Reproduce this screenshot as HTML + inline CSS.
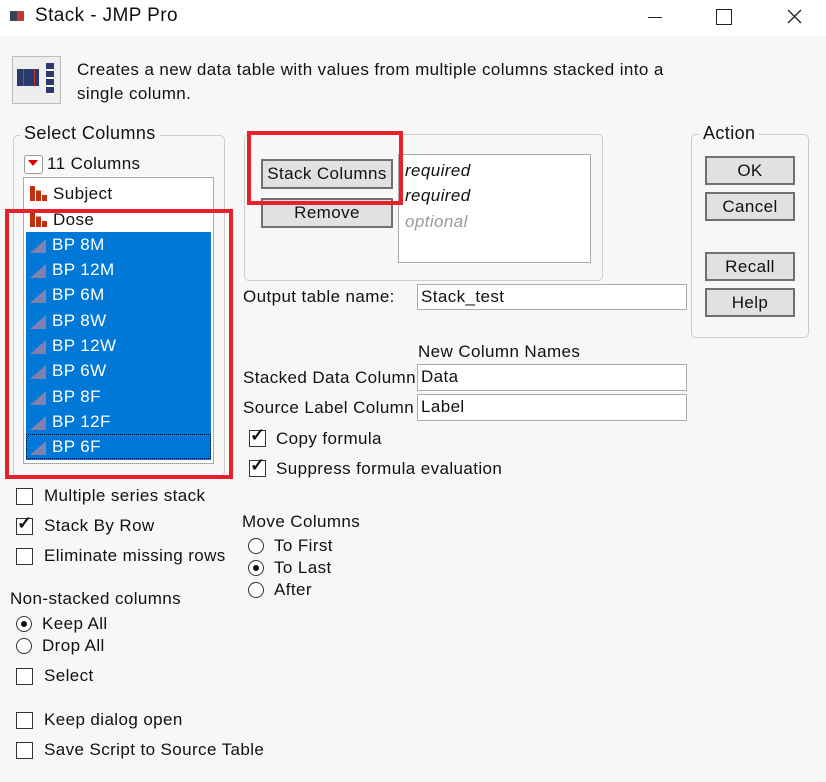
<!DOCTYPE html><html><head><style>
body{margin:0;width:826px;height:782px;background:#f7f7f7;font-family:"Liberation Sans",sans-serif;font-size:17px;letter-spacing:0.4px;color:#111;position:relative;overflow:hidden}
.a{position:absolute;white-space:nowrap}
.tb{position:absolute;left:0;top:0;width:826px;height:36px;background:#fff}
.btn{position:absolute;background:#e1e1e1;border:2px solid #707070;box-sizing:border-box;text-align:center}
.inp{position:absolute;background:#fff;border:1px solid #aaa;box-sizing:border-box;padding-left:3px;line-height:24px}
.cb{position:absolute;width:17px;height:17px;border:1px solid #333;background:#fff;box-sizing:border-box}
.rd{position:absolute;width:16px;height:16px;border:1px solid #333;border-radius:50%;background:#fff;box-sizing:border-box}
.grp{position:absolute;border:1px solid #ccc;border-radius:5px}
.row{position:absolute;left:26px;width:185px;height:25px;line-height:25px}
.sel{background:#0078d7;color:#fff}
.red{position:absolute;border:4px solid #e8202a;box-sizing:border-box}
.tri{display:inline-block;width:0;height:0;border-left:16px solid transparent;border-bottom:14px solid #8080b0;margin:0 6px 0 4px;vertical-align:-3px}
.bar{display:inline-block;width:17px;height:15px;margin:0 6px 0 4px;vertical-align:-2px;background:linear-gradient(90deg,#c03010 0 5px,transparent 5px 6px,#c03010 6px 11px,transparent 11px 12px,#c03010 12px 17px);clip-path:polygon(0 0,5px 0,5px 30%,6px 30%,6px 30%,11px 30%,11px 60%,17px 60%,17px 100%,0 100%)}
.ck{position:absolute;font-size:18px;font-weight:bold}
</style></head><body>
<div class="tb"></div>
<div class="a" style="left:10px;top:11px;width:14px;height:10px;background:linear-gradient(90deg,#345 0 50%,#c33 50%)"></div>
<div class="a" style="left:35px;top:5px;font-size:19px">Stack - JMP Pro</div>
<div class="a" style="left:648px;top:17px;width:14px;height:1px;background:#222"></div>
<div class="a" style="left:716px;top:9px;width:14px;height:14px;border:1px solid #222"></div>
<svg class="a" style="left:787px;top:9px" width="15" height="15"><path d="M1 1L14 14M14 1L1 14" stroke="#222" stroke-width="1.3"/></svg>
<div class="a" style="left:12px;top:56px;width:47px;height:46px;border:1px solid #bbb;background:#eee"></div>
<div class="a" style="left:17px;top:69px;width:22px;height:17px;background:repeating-linear-gradient(90deg,#2a3a6a 0 6px,#c33 6px 7px,#2a3a6a 7px 11px)"></div>
<div class="a" style="left:46px;top:63px;width:8px;height:32px;background:repeating-linear-gradient(#2a3a6a 0 6px,#fff 6px 8px)"></div>
<div class="a" style="left:77px;top:58px;line-height:24px">Creates a new data table with values from multiple columns stacked into a<br>single column.</div>
<div class="grp" style="left:13px;top:135px;width:210px;height:340px"></div>
<div class="a" style="left:20px;top:123px;background:#f7f7f7;padding:0 4px;font-size:18px">Select Columns</div>
<div class="a" style="left:24px;top:155px;width:17px;height:17px;border:1px solid #999;border-radius:3px;background:#fff"></div>
<div class="a" style="left:28px;top:160px;border-left:5px solid transparent;border-right:5px solid transparent;border-top:6px solid #d00"></div>
<div class="a" style="left:47px;top:154px">11 Columns</div>
<div class="a" style="left:23px;top:177px;width:189px;height:285px;background:#fff;border:1px solid #aaa"></div>
<div class="row" style="top:181px"><span class="bar"></span>Subject</div>
<div class="row" style="top:207px"><span class="bar"></span>Dose</div>
<div class="a sel" style="left:26px;top:232px;width:185px;height:228px"></div>
<div class="row sel" style="top:232px"><span class="tri"></span>BP 8M</div>
<div class="row sel" style="top:257px"><span class="tri"></span>BP 12M</div>
<div class="row sel" style="top:282px"><span class="tri"></span>BP 6M</div>
<div class="row sel" style="top:308px"><span class="tri"></span>BP 8W</div>
<div class="row sel" style="top:333px"><span class="tri"></span>BP 12W</div>
<div class="row sel" style="top:358px"><span class="tri"></span>BP 6W</div>
<div class="row sel" style="top:384px"><span class="tri"></span>BP 8F</div>
<div class="row sel" style="top:409px"><span class="tri"></span>BP 12F</div>
<div class="row sel" style="top:434px;outline:1px dotted #003;outline-offset:-1px"><span class="tri"></span>BP 6F</div>
<div class="red" style="left:5px;top:209px;width:228px;height:270px"></div>
<div class="cb" style="left:16px;top:488px"></div><div class="a" style="left:44px;top:486px">Multiple series stack</div>
<div class="cb" style="left:16px;top:518px"></div><div class="ck" style="left:17px;top:513px">✓</div><div class="a" style="left:44px;top:516px">Stack By Row</div>
<div class="cb" style="left:16px;top:548px"></div><div class="a" style="left:44px;top:546px">Eliminate missing rows</div>
<div class="a" style="left:10px;top:589px">Non-stacked columns</div>
<div class="rd" style="left:16px;top:616px"></div><div class="a" style="left:21px;top:621px;width:6px;height:6px;border-radius:50%;background:#111"></div><div class="a" style="left:42px;top:614px">Keep All</div>
<div class="rd" style="left:16px;top:638px"></div><div class="a" style="left:42px;top:636px">Drop All</div>
<div class="cb" style="left:16px;top:668px"></div><div class="a" style="left:44px;top:666px">Select</div>
<div class="cb" style="left:16px;top:712px"></div><div class="a" style="left:44px;top:710px">Keep dialog open</div>
<div class="cb" style="left:16px;top:742px"></div><div class="a" style="left:44px;top:740px">Save Script to Source Table</div>
<div class="grp" style="left:244px;top:134px;width:357px;height:145px"></div>
<div class="btn" style="left:261px;top:159px;width:132px;height:30px;line-height:26px">Stack Columns</div>
<div class="btn" style="left:261px;top:198px;width:132px;height:30px;line-height:26px">Remove</div>
<div class="a" style="left:398px;top:154px;width:191px;height:107px;background:#fff;border:1px solid #aaa"></div>
<div class="a" style="left:405px;top:161px;font-style:italic">required</div>
<div class="a" style="left:405px;top:186px;font-style:italic">required</div>
<div class="a" style="left:405px;top:212px;font-style:italic;color:#999">optional</div>
<div class="red" style="left:247px;top:131px;width:156px;height:74px"></div>
<div class="a" style="left:243px;top:287px">Output table name:</div>
<div class="inp" style="left:417px;top:284px;width:270px;height:26px">Stack_test</div>
<div class="a" style="left:418px;top:342px">New Column Names</div>
<div class="a" style="left:243px;top:368px">Stacked Data Column</div>
<div class="inp" style="left:417px;top:364px;width:270px;height:27px">Data</div>
<div class="a" style="left:243px;top:398px">Source Label Column</div>
<div class="inp" style="left:417px;top:394px;width:270px;height:27px">Label</div>
<div class="cb" style="left:249px;top:430px"></div><div class="ck" style="left:250px;top:425px">✓</div><div class="a" style="left:276px;top:429px">Copy formula</div>
<div class="cb" style="left:249px;top:460px"></div><div class="ck" style="left:250px;top:455px">✓</div><div class="a" style="left:276px;top:459px">Suppress formula evaluation</div>
<div class="a" style="left:242px;top:512px">Move Columns</div>
<div class="rd" style="left:248px;top:538px"></div><div class="a" style="left:274px;top:536px">To First</div>
<div class="rd" style="left:248px;top:560px"></div><div class="a" style="left:253px;top:565px;width:6px;height:6px;border-radius:50%;background:#111"></div><div class="a" style="left:274px;top:558px">To Last</div>
<div class="rd" style="left:248px;top:582px"></div><div class="a" style="left:274px;top:580px">After</div>
<div class="grp" style="left:691px;top:134px;width:116px;height:202px"></div>
<div class="a" style="left:699px;top:123px;background:#f7f7f7;padding:0 4px;font-size:18px">Action</div>
<div class="btn" style="left:705px;top:156px;width:90px;height:29px;line-height:25px">OK</div>
<div class="btn" style="left:705px;top:192px;width:90px;height:29px;line-height:25px">Cancel</div>
<div class="btn" style="left:705px;top:252px;width:90px;height:29px;line-height:25px">Recall</div>
<div class="btn" style="left:705px;top:288px;width:90px;height:29px;line-height:25px">Help</div>
</body></html>
